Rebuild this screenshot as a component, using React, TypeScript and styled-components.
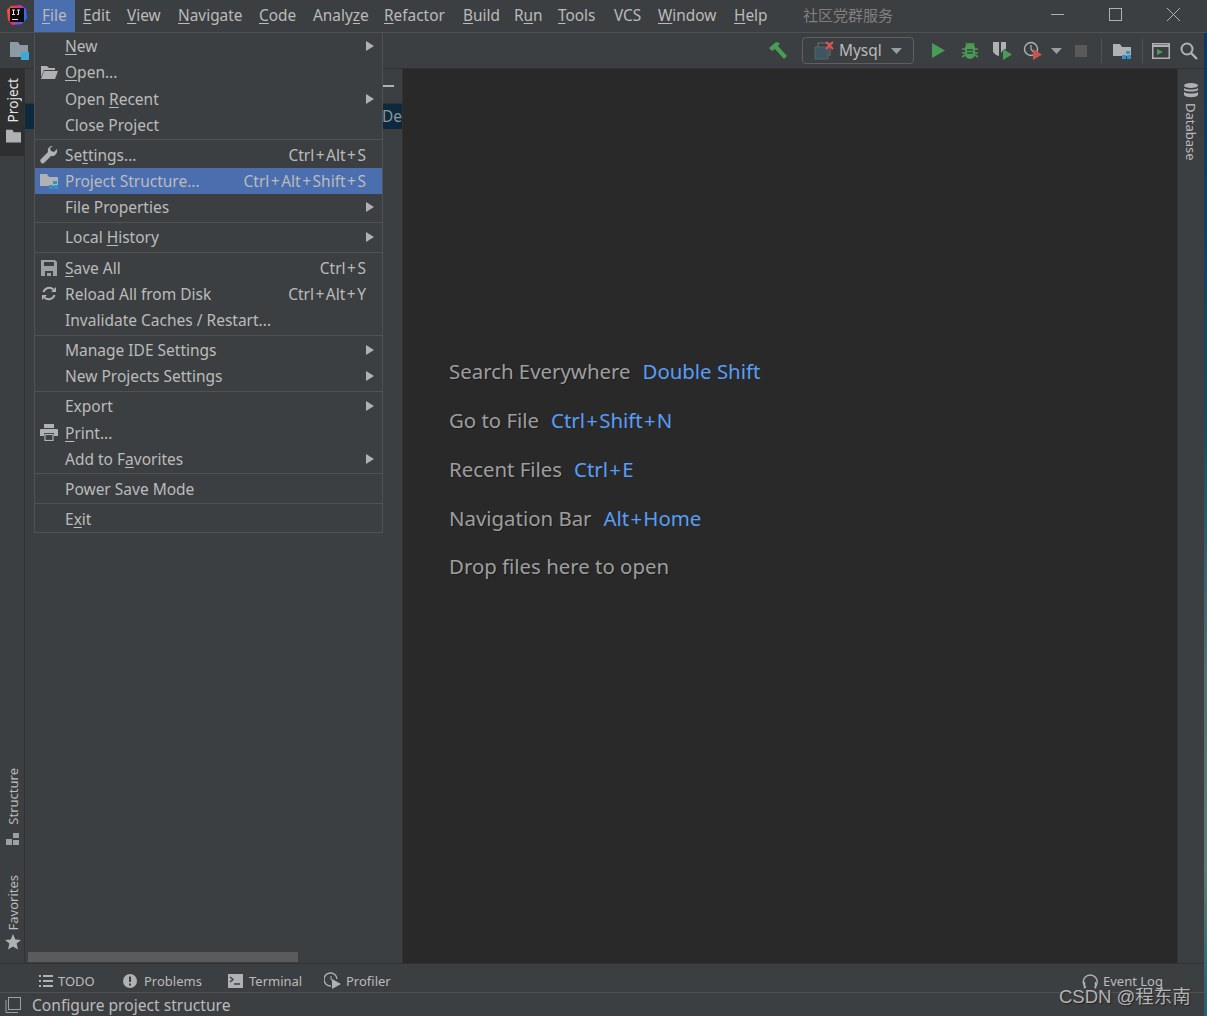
import React from "react";
import styled, { createGlobalStyle } from "styled-components";

const Global = createGlobalStyle`
  html, body { margin: 0; padding: 0; background: #3c3f41; }
  body { font-family: "Noto Sans", "Open Sans", "Liberation Sans", sans-serif; color: #bbbbbb; overflow: hidden; }
  * { box-sizing: border-box; }
  u { text-underline-offset: 2px; text-decoration-thickness: 1px; }
`;

const Page = styled.div`
  position: relative;
  width: 1207px;
  height: 1016px;
  display: flex;
  flex-direction: column;
  background: #3c3f41;
  overflow: hidden;
`;

const TitleBar = styled.div`
  height: 33px;
  flex: none;
  display: flex;
  align-items: stretch;
  border-bottom: 1px solid #515151;
`;
const LogoSlot = styled.div`
  width: 34px;
  flex: none;
  display: flex;
  align-items: center;
  padding: 0 0 2px 7px;
`;
const MenuTitle = styled.div<{ $w: number; $active?: boolean }>`
  width: ${(p) => p.$w}px;
  flex: none;
  padding: 0 0 2px 8px;
  display: flex;
  align-items: center;
  font-size: 15.4px;
  color: #bbbbbb;
  white-space: nowrap;
  background: ${(p) => (p.$active ? "#4b6eaf" : "transparent")};
`;
const WindowTitle = styled.div`
  width: 225px;
  flex: none;
  display: flex;
  align-items: center;
  padding-bottom: 3px;
  font-family: "Noto Sans CJK SC", sans-serif;
  font-size: 15px;
  color: #808080;
`;
const WindowButton = styled.div<{ $w: number }>`
  width: ${(p) => p.$w}px;
  flex: none;
  display: flex;
  align-items: center;
  justify-content: center;
  padding-bottom: 3px;
`;

const ToolBar = styled.div`
  height: 36px;
  flex: none;
  display: flex;
  align-items: center;
  border-bottom: 1px solid #323232;
`;
const ToolSlot = styled.div<{ $ml: number; $w: number }>`
  margin-left: ${(p) => p.$ml}px;
  width: ${(p) => p.$w}px;
  height: 20px;
  flex: none;
  display: flex;
  align-items: center;
  justify-content: center;
`;
const ToolDivider = styled.div<{ $ml: number }>`
  margin-left: ${(p) => p.$ml}px;
  width: 1px;
  height: 24px;
  flex: none;
  background: #515151;
`;
const RunConfig = styled.div`
  margin-left: 14px;
  width: 112px;
  height: 27px;
  flex: none;
  display: flex;
  align-items: center;
  padding-left: 11px;
  gap: 3px;
  border: 1px solid #5e6060;
  border-radius: 4px;
  font-size: 15.4px;
  color: #bbbbbb;
`;
const ConfigCaret = styled.div`
  margin-left: 6px;
  display: flex;
`;
const Spacer = styled.div`
  flex: 1;
`;

const Main = styled.div`
  flex: 1;
  min-height: 0;
  display: flex;
`;
const LeftStripe = styled.div`
  width: 25px;
  flex: none;
  display: flex;
  flex-direction: column;
  border-right: 1px solid #323232;
`;
const ProjectTab = styled.div`
  width: 24px;
  height: 87px;
  flex: none;
  padding: 9px 0 0 2px;
  display: flex;
  flex-direction: column;
  align-items: center;
  gap: 7px;
  background: #2d2f30;
  color: #e6e6e6;
`;
const StripeTab = styled.div<{ $gap: number; $mt?: number; $mb?: number }>`
  display: flex;
  flex-direction: column;
  align-items: center;
  width: 24px;
  padding-left: 1px;
  gap: ${(p) => p.$gap}px;
  margin-top: ${(p) => p.$mt ?? 0}px;
  margin-bottom: ${(p) => p.$mb ?? 0}px;
  color: #bbbbbb;
`;
const VerticalLabel = styled.span<{ $up?: boolean }>`
  writing-mode: vertical-rl;
  transform: ${(p) => (p.$up ? "rotate(180deg)" : "none")};
  font-size: 13px;
  line-height: 14px;
  white-space: nowrap;
`;
const ProjectLabel = styled(VerticalLabel)`
  font-size: 13.6px;
`;
const ProjectPanel = styled.div`
  width: 378px;
  flex: none;
  display: flex;
  flex-direction: column;
  border-right: 1px solid #323232;
`;
const PanelHeader = styled.div`
  height: 35px;
  flex: none;
  display: flex;
  justify-content: flex-end;
  align-items: center;
  padding-right: 8px;
  border-bottom: 1px solid #323232;
`;
const Minimize = styled.div`
  width: 11px;
  height: 2px;
  margin-top: -1px;
  background: #afb1b3;
`;
const TreeRow = styled.div`
  height: 25px;
  flex: none;
  background: #0d293e;
  display: flex;
  justify-content: flex-end;
  align-items: center;
  overflow: hidden;
  padding-bottom: 1px;
  font-size: 15.4px;
  color: #8f9499;
`;
const RowClip = styled.span`
  width: 20px;
  flex: none;
  overflow: hidden;
`;
const PanelFill = styled.div`
  flex: 1;
`;
const HScroll = styled.div`
  width: 270px;
  height: 10px;
  margin: 0 0 1px 3px;
  flex: none;
  background: #595b5d;
`;
const Editor = styled.div`
  flex: 1;
  min-width: 0;
  background: #292929;
  padding: 278px 0 0 46px;
  display: flex;
  flex-direction: column;
`;
const Hint = styled.div`
  height: 48.75px;
  flex: none;
  display: flex;
  gap: 12px;
  align-items: center;
  font-size: 20.4px;
  color: #9e9e9e;
  text-shadow: 1px 1px 0 #1c1c1c;
  white-space: nowrap;
`;
const Key = styled.span`
  color: #589df6;
  text-shadow: none;
`;
const Plus = styled.span<{ $m: number }>`
  margin: 0 ${(p) => p.$m}px;
`;
const RightStripe = styled.div`
  width: 30px;
  flex: none;
  display: flex;
  flex-direction: column;
  align-items: center;
  padding: 14px 3px 0 0;
  gap: 5px;
  border-left: 1px solid #323232;
`;
const EdgeStrip = styled.div`
  position: absolute;
  right: 0;
  top: 33px;
  bottom: 0;
  width: 3px;
  background: linear-gradient(to bottom, #10355f 0%, #1c4a5c 40%, #4f6f70 65%, #5a7a72 85%, #2b5d6b 100%);
`;

const ToolWindowBar = styled.div`
  height: 29px;
  flex: none;
  display: flex;
  align-items: center;
  padding: 5px 43px 0 39px;
  border-top: 1px solid #323232;
  font-size: 13px;
  color: #bbbbbb;
`;
const ToolTab = styled.div<{ $w: number; $gap?: number }>`
  width: ${(p) => p.$w}px;
  flex: none;
  display: flex;
  align-items: center;
  gap: ${(p) => p.$gap ?? 5}px;
  white-space: nowrap;
`;
const StatusBar = styled.div`
  height: 24px;
  flex: none;
  display: flex;
  align-items: center;
  padding: 1px 0 0 5px;
  gap: 11px;
  border-top: 1px solid #515151;
  font-size: 15.6px;
  color: #bbbbbb;
`;

const Menu = styled.div`
  position: absolute;
  left: 34px;
  top: 32px;
  width: 349px;
  background: #3c3f41;
  border: 1px solid #515151;
  display: flex;
  flex-direction: column;
`;
const Item = styled.div<{ $selected?: boolean }>`
  height: 26.25px;
  flex: none;
  display: grid;
  grid-template-columns: 30px 1fr auto 16px;
  align-items: center;
  font-size: 15.5px;
  color: #bbbbbb;
  white-space: nowrap;
  background: ${(p) => (p.$selected ? "#4b6eaf" : "transparent")};
`;
const ItemIcon = styled.div`
  display: flex;
  align-items: center;
  justify-content: center;
  padding-right: 2px;
`;
const Arrow = styled.div`
  justify-self: end;
  margin-right: 8px;
  width: 0;
  height: 0;
  border-left: 8px solid #afb1b3;
  border-top: 5px solid transparent;
  border-bottom: 5px solid transparent;
`;
const Separator = styled.div`
  height: 3.8px;
  flex: none;
  display: flex;
  align-items: center;
  &::before {
    content: "";
    flex: 1;
    height: 1px;
    background: #515151;
  }
`;
const Watermark = styled.div`
  position: absolute;
  left: 1059px;
  top: 985px;
  font-family: "Liberation Sans", "Noto Sans CJK SC", sans-serif;
  font-size: 18.5px;
  line-height: 24px;
  color: #b4b4b4;
  text-shadow: 1px 1px 1px #222;
  white-space: nowrap;
`;

const Logo = () => (
  <svg width="20" height="20" viewBox="0 0 20 20">
    <defs>
      <linearGradient id="lg" x1="0" y1="0.3" x2="1" y2="0.6">
        <stop offset="0" stopColor="#f0603a" />
        <stop offset="0.35" stopColor="#fe2857" />
        <stop offset="0.7" stopColor="#7a4bf0" />
        <stop offset="1" stopColor="#087cfa" />
      </linearGradient>
    </defs>
    <path d="M4 1 L14 0 L19 4 L20 13 L15 19 L5 20 L1 15 L0 5 Z" fill="url(#lg)" />
    <rect x="3" y="3" width="14" height="14" fill="#0b0b0b" />
    <rect x="5" y="14" width="6" height="1" fill="#e6e6e6" />
    <path d="M5 5h3M6.500 5v4.500M5 9.500h3M10 5h3M11.500 5v4.500H10" stroke="#e6e6e6" strokeWidth="1" fill="none" />
  </svg>
);

const Folder = ({ c = "#9aa7b0", s = 19 }: { c?: string; s?: number }) => (
  <svg width={s} height={s} viewBox="0 0 19 19">
    <path d="M0 1h8l2 3h9v13H0z" fill={c} />
  </svg>
);
const ProjectFolder = () => (
  <svg width="20" height="18" viewBox="0 0 20 18">
    <path d="M0 0h8l2 3h8v12H0z" fill="#8c9aa3" />
    <rect x="11" y="10" width="8" height="8" fill="#3ea9d8" />
  </svg>
);
const StructFolder = () => (
  <svg width="19" height="16" viewBox="0 0 19 16">
    <path d="M0 1h7l2 3h9v9H0z" fill="#afb1b3" />
    <path d="M13 8h4v3h-4zM9 12h4v4H9zM14 12h4v4h-4z" fill="#3592c4" />
  </svg>
);
const Hammer = () => (
  <svg width="20" height="20" viewBox="0 0 20 20">
    <path d="M1 7 L8 1 L12 2 L10 5 L19 15 L16 18 L7 8 L4 10z" fill="#499c54" />
  </svg>
);
const RunCfgIcon = () => (
  <svg width="22" height="20" viewBox="0 0 22 20">
    <rect x="4" y="2" width="12" height="12" fill="none" stroke="#5e6060" strokeWidth="1.5" />
    <rect x="1" y="6" width="13" height="12" fill="#3d5663" stroke="#5e6060" strokeWidth="1" />
    <path d="M12 1l7 7M19 1l-7 7" stroke="#e05555" strokeWidth="2" />
  </svg>
);
const Caret = ({ w = 11 }: { w?: number }) => (
  <svg width={w} height="6" viewBox="0 0 11 6">
    <path d="M0 0h11L5.500 6z" fill="#9b9e9f" />
  </svg>
);
const Play = () => (
  <svg width="13" height="15" viewBox="0 0 13 15">
    <path d="M0 0l13 7.500L0 15z" fill="#499c54" />
  </svg>
);
const Bug = () => (
  <svg width="16" height="18" viewBox="0 0 16 18">
    <path d="M3 6a5 5 0 0 1 10 0v6a5 5 0 0 1-10 0z" fill="#499c54" />
    <path d="M0 7h3M13 7h3M0 11h3M13 11h3M0 15l3-2M16 15l-3-2M4 1l2 3M12 1l-2 3" stroke="#499c54" strokeWidth="1.6" />
    <path d="M5 8h6M5 11h6" stroke="#3c3f41" strokeWidth="1.4" />
  </svg>
);
const Coverage = () => (
  <svg width="20" height="19" viewBox="0 0 20 19">
    <path d="M0 1h6v14l-3-1-3-3zM8 1h5v7l-3 1-2 3z" fill="#afb1b3" />
    <path d="M10 8l9 5.500-9 5.500z" fill="#499c54" />
  </svg>
);
const Profile = () => (
  <svg width="20" height="19" viewBox="0 0 20 19">
    <circle cx="8" cy="8" r="6.500" fill="none" stroke="#afb1b3" strokeWidth="1.4" />
    <path d="M8 4v4l2 3" stroke="#afb1b3" strokeWidth="1.2" fill="none" />
    <path d="M10 8l9 5.500-9 5.500z" fill="#c75450" />
  </svg>
);
const Stop = () => (
  <svg width="12" height="12" viewBox="0 0 12 12">
    <rect width="12" height="12" fill="#5a5a5a" />
  </svg>
);
const RunWindow = () => (
  <svg width="18" height="16" viewBox="0 0 18 16">
    <rect x="0.750" y="0.750" width="16.500" height="14.500" fill="none" stroke="#afb1b3" strokeWidth="1.5" />
    <path d="M1 3h16" stroke="#afb1b3" strokeWidth="2" />
    <path d="M5 6l6 3-6 3z" fill="#499c54" />
  </svg>
);
const Search = () => (
  <svg width="18" height="18" viewBox="0 0 18 18">
    <circle cx="7" cy="7" r="5.500" fill="none" stroke="#afb1b3" strokeWidth="2" />
    <path d="M11 11l6 6" stroke="#afb1b3" strokeWidth="2.4" />
  </svg>
);
const OpenFolder = () => (
  <svg width="18" height="13" viewBox="0 0 18 13">
    <path d="M1 0h6l2 2h6v2H4L1 11z" fill="#afb1b3" />
    <path d="M4 5h14l-3 8H1z" fill="#afb1b3" />
  </svg>
);
const Wrench = () => (
  <svg width="18" height="18" viewBox="0 0 18 18">
    <path d="M17 3l-3 3-3-1-1-3 3-2c-3-.5-6 2-5 6L1 13c-1 1-1 2 0 3.500s2.500 1 3.500 0L11 10c4 1 7-3 6-7z" fill="#afb1b3" />
  </svg>
);
const Save = () => (
  <svg width="16" height="16" viewBox="0 0 16 16">
    <path d="M0 0h14l2 2v14H0z" fill="#9da0a2" />
    <rect x="3" y="2" width="10" height="4" fill="#3c3f41" />
    <rect x="4" y="11" width="8" height="5" fill="#3c3f41" />
    <rect x="6" y="13" width="4" height="3" fill="#9da0a2" />
  </svg>
);
const Reload = () => (
  <svg width="16" height="15" viewBox="0 0 16 15">
    <path d="M2.500 6a6 6 0 0 1 10-2.500" fill="none" stroke="#afb1b3" strokeWidth="2" />
    <path d="M13.500 9a6 6 0 0 1-10 2.500" fill="none" stroke="#afb1b3" strokeWidth="2" />
    <path d="M15 1v5h-5zM1 14V9h5z" fill="#afb1b3" />
  </svg>
);
const Printer = () => (
  <svg width="18" height="17" viewBox="0 0 18 17">
    <rect x="4" y="0" width="10" height="4" fill="#afb1b3" />
    <path d="M1 5h16a1 1 0 0 1 1 1v6h-4V9H4v3H0V6a1 1 0 0 1 1-1z" fill="#afb1b3" />
    <rect x="5" y="10.500" width="8" height="6" fill="none" stroke="#afb1b3" strokeWidth="1.2" />
  </svg>
);
const Stack = () => (
  <svg width="16" height="15" viewBox="0 0 16 15">
    <ellipse cx="8" cy="2.500" rx="7" ry="2.500" fill="#afb1b3" />
    <path d="M1 5c2 2 12 2 14 0v2c-2 2-12 2-14 0zM1 9c2 2 12 2 14 0v3c-2 3-12 3-14 0z" fill="#afb1b3" />
  </svg>
);
const Squares = () => (
  <svg width="14" height="12" viewBox="0 0 14 12">
    <path d="M7 0h6v5H7zM0 6h6v6H0zM7 7h6v5H7z" fill="#9da0a2" />
  </svg>
);
const Star = () => (
  <svg width="16" height="16" viewBox="0 0 16 16">
    <path d="M8 0l2.300 5.500 5.700.4-4.400 3.700 1.400 5.900L8 12.400l-5 3.100 1.400-5.900L0 5.900l5.700-.4z" fill="#afb1b3" />
  </svg>
);
const ListIcon = () => (
  <svg width="14" height="12" viewBox="0 0 14 12">
    <path d="M0 0h2v2H0zM4 0h10v2H4zM0 5h2v2H0zM4 5h10v2H4zM0 10h2v2H0zM4 10h10v2H4z" fill="#afb1b3" />
  </svg>
);
const Alert = () => (
  <svg width="14" height="14" viewBox="0 0 14 14">
    <circle cx="7" cy="7" r="7" fill="#afb1b3" />
    <path d="M6 2.500h2v5.500H6zM6 9.500h2v2H6z" fill="#3c3f41" />
  </svg>
);
const TerminalIcon = () => (
  <svg width="15" height="14" viewBox="0 0 15 14">
    <rect width="15" height="14" fill="#afb1b3" />
    <path d="M2 3l3 2.500L2 8M6 10h6" stroke="#3c3f41" strokeWidth="1.4" fill="none" />
  </svg>
);
const ProfilerIcon = () => (
  <svg width="17" height="17" viewBox="0 0 17 17">
    <path d="M7 14A6.500 6.500 0 1 1 13 7" fill="none" stroke="#afb1b3" strokeWidth="1.4" />
    <path d="M7 4v3l1.500 2" stroke="#afb1b3" fill="none" />
    <path d="M8 7l9 5-9 5z" fill="#afb1b3" />
  </svg>
);
const Bubble = () => (
  <svg width="16" height="16" viewBox="0 0 16 16">
    <path d="M4 14.500A7 7 0 1 1 12.500 14.500" fill="none" stroke="#afb1b3" strokeWidth="1.4" />
    <path d="M2.500 9v6.500M13.500 9v6.500" stroke="#afb1b3" strokeWidth="1.4" />
  </svg>
);
const StatusBox = () => (
  <svg width="16" height="16" viewBox="0 0 16 16">
    <rect x="3.500" y="0.500" width="12" height="12" fill="none" stroke="#9da0a2" />
    <path d="M1 3v12.500h12" fill="none" stroke="#9da0a2" />
  </svg>
);

const combo = (text: string, m: number) =>
  text.split("+").map((part, i) => (
    <React.Fragment key={i}>
      {i > 0 && <Plus $m={m}>+</Plus>}
      {part}
    </React.Fragment>
  ));

const titles: [React.ReactNode, number][] = [
  [<><u>E</u>dit</>, 44],
  [<><u>V</u>iew</>, 51],
  [<><u>N</u>avigate</>, 81],
  [<><u>C</u>ode</>, 54],
  [<>Analy<u>z</u>e</>, 71],
  [<><u>R</u>efactor</>, 79],
  [<><u>B</u>uild</>, 51],
  [<>R<u>u</u>n</>, 44],
  [<><u>T</u>ools</>, 56],
  [<>VCS</>, 44],
  [<><u>W</u>indow</>, 76],
  [<><u>H</u>elp</>, 77],
];

type Entry =
  | { sep: true }
  | { label: React.ReactNode; icon?: React.ReactNode; key?: string; sub?: boolean; selected?: boolean };

const entries: Entry[] = [
  { label: <><u>N</u>ew</>, sub: true },
  { label: <><u>O</u>pen...</>, icon: <OpenFolder /> },
  { label: <>Open <u>R</u>ecent</>, sub: true },
  { label: "Close Project" },
  { sep: true },
  { label: <>Se<u>t</u>tings...</>, icon: <Wrench />, key: "Ctrl+Alt+S" },
  { label: "Project Structure...", icon: <StructFolder />, key: "Ctrl+Alt+Shift+S", selected: true },
  { label: "File Properties", sub: true },
  { sep: true },
  { label: <>Local <u>H</u>istory</>, sub: true },
  { sep: true },
  { label: <><u>S</u>ave All</>, icon: <Save />, key: "Ctrl+S" },
  { label: "Reload All from Disk", icon: <Reload />, key: "Ctrl+Alt+Y" },
  { label: "Invalidate Caches / Restart..." },
  { sep: true },
  { label: "Manage IDE Settings", sub: true },
  { label: "New Projects Settings", sub: true },
  { sep: true },
  { label: "Export", sub: true },
  { label: <><u>P</u>rint...</>, icon: <Printer /> },
  { label: <>Add to F<u>a</u>vorites</>, sub: true },
  { sep: true },
  { label: "Power Save Mode" },
  { sep: true },
  { label: <>E<u>x</u>it</> },
];

const hints: [string, string?][] = [
  ["Search Everywhere", "Double Shift"],
  ["Go to File", "Ctrl+Shift+N"],
  ["Recent Files", "Ctrl+E"],
  ["Navigation Bar", "Alt+Home"],
  ["Drop files here to open"],
];

export default function App() {
  return (
    <Page>
      <Global />
      <TitleBar>
        <LogoSlot><Logo /></LogoSlot>
        <MenuTitle $w={41} $active><span><u>F</u>ile</span></MenuTitle>
        {titles.map(([t, w], i) => (
          <MenuTitle key={i} $w={w}><span>{t}</span></MenuTitle>
        ))}
        <WindowTitle>社区党群服务</WindowTitle>
        <WindowButton $w={58}>
          <svg width="13" height="1"><rect width="13" height="1" fill="#afb1b3" /></svg>
        </WindowButton>
        <WindowButton $w={58}>
          <svg width="13" height="13"><rect x="0.5" y="0.5" width="12" height="12" fill="none" stroke="#afb1b3" /></svg>
        </WindowButton>
        <WindowButton $w={58}>
          <svg width="13" height="13"><path d="M0 0l13 13M13 0L0 13" stroke="#afb1b3" /></svg>
        </WindowButton>
      </TitleBar>
      <ToolBar>
        <ToolSlot $ml={10} $w={20}><ProjectFolder /></ToolSlot>
        <Spacer />
        <ToolSlot $ml={0} $w={20}><Hammer /></ToolSlot>
        <RunConfig>
          <RunCfgIcon />
          <span>Mysql</span>
          <ConfigCaret><Caret /></ConfigCaret>
        </RunConfig>
        <ToolSlot $ml={18} $w={13}><Play /></ToolSlot>
        <ToolSlot $ml={17} $w={16}><Bug /></ToolSlot>
        <ToolSlot $ml={15} $w={20}><Coverage /></ToolSlot>
        <ToolSlot $ml={10} $w={20}><Profile /></ToolSlot>
        <ToolSlot $ml={8} $w={11}><Caret /></ToolSlot>
        <ToolSlot $ml={13} $w={12}><Stop /></ToolSlot>
        <ToolDivider $ml={14} />
        <ToolSlot $ml={11} $w={19}><StructFolder /></ToolSlot>
        <ToolDivider $ml={10} />
        <ToolSlot $ml={9} $w={18}><RunWindow /></ToolSlot>
        <ToolSlot $ml={10} $w={18}><Search /></ToolSlot>
        <ToolSlot $ml={9} $w={0} />
      </ToolBar>
      <Main>
        <LeftStripe>
          <ProjectTab>
            <ProjectLabel $up>Project</ProjectLabel>
            <Folder c="#afb1b3" s={15} />
          </ProjectTab>
          <PanelFill />
          <StripeTab $gap={8}>
            <VerticalLabel $up>Structure</VerticalLabel>
            <Squares />
          </StripeTab>
          <StripeTab $gap={4} $mt={30} $mb={13}>
            <VerticalLabel $up>Favorites</VerticalLabel>
            <Star />
          </StripeTab>
        </LeftStripe>
        <ProjectPanel>
          <PanelHeader><Minimize /></PanelHeader>
          <TreeRow><RowClip>De</RowClip></TreeRow>
          <PanelFill />
          <HScroll />
        </ProjectPanel>
        <Editor>
          {hints.map(([a, b]) => (
            <Hint key={a}>
              <span>{a}</span>
              {b && <Key>{combo(b, 1.25)}</Key>}
            </Hint>
          ))}
        </Editor>
        <RightStripe>
          <Stack />
          <VerticalLabel>Database</VerticalLabel>
        </RightStripe>
      </Main>
      <ToolWindowBar>
        <ToolTab $w={84}><ListIcon /><span>TODO</span></ToolTab>
        <ToolTab $w={105} $gap={7}><Alert /><span>Problems</span></ToolTab>
        <ToolTab $w={96} $gap={6}><TerminalIcon /><span>Terminal</span></ToolTab>
        <ToolTab $w={80}><ProfilerIcon /><span>Profiler</span></ToolTab>
        <Spacer />
        <ToolTab $w={82}><Bubble /><span>Event Log</span></ToolTab>
      </ToolWindowBar>
      <StatusBar>
        <StatusBox />
        <span>Configure project structure</span>
      </StatusBar>
      <EdgeStrip />
      <Menu>
        {entries.map((e, i) =>
          "sep" in e ? (
            <Separator key={i} />
          ) : (
            <Item key={i} $selected={e.selected}>
              <ItemIcon>{e.icon}</ItemIcon>
              <span>{e.label}</span>
              {e.key ? <span>{combo(e.key, 1.5)}</span> : <span />}
              {e.sub ? <Arrow /> : <span />}
            </Item>
          )
        )}
      </Menu>
      <Watermark>CSDN @程东南</Watermark>
    </Page>
  );
}
